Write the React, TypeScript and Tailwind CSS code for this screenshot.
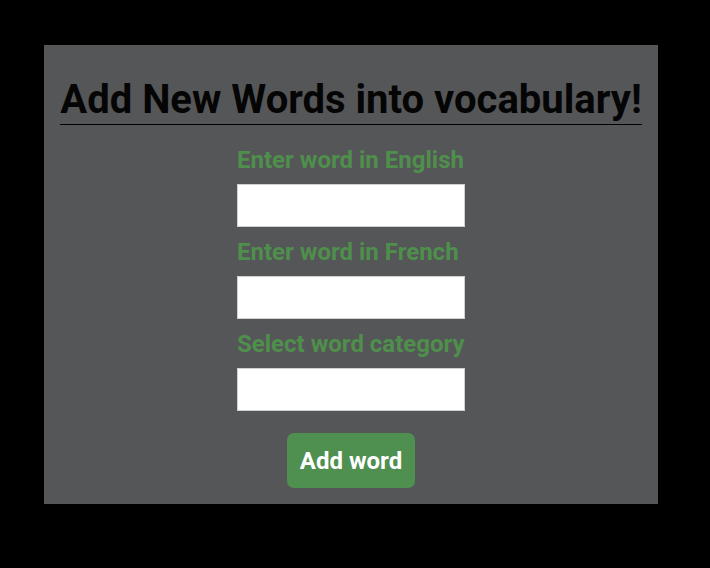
import { useState } from 'react'

export default function App(): React.JSX.Element {
  const [english, setEnglish] = useState('')
  const [french, setFrench] = useState('')
  const [category, setCategory] = useState('')

  const fields = [
    { label: 'Enter word in English', value: english, set: setEnglish },
    { label: 'Enter word in French', value: french, set: setFrench },
    { label: 'Select word category', value: category, set: setCategory },
  ]

  return (
    <div className="h-[568px] w-[710px] bg-black pl-[44px] pt-[45px] font-['Roboto',sans-serif]">
      <div className="flex h-[459px] w-[614px] flex-col items-center bg-[#555658] pt-[31px]">
        <h1 className="inline-block border-b border-black text-[40px] leading-[48px] font-bold text-[#050505]">
          Add New Words into vocabulary!
        </h1>
        <form className="mt-[21px] flex flex-col items-center" onSubmit={(e) => e.preventDefault()}>
          {fields.map((f) => (
            <label key={f.label} className="flex w-[228px] flex-col">
              <span className="h-[28px] pt-px text-[24px] leading-[27px] font-bold whitespace-nowrap text-[#4f8f4c]">
                {f.label}
              </span>
              <input
                value={f.value}
                onChange={(e) => f.set(e.target.value)}
                className="mt-[10px] mb-[11px] h-[43px] w-[228px] border border-[#d0d0d0] bg-white px-2 text-black outline-none"
              />
            </label>
          ))}
          <button
            type="submit"
            className="mt-[11px] h-[55px] w-[128px] rounded-[7px] bg-[#4f8f4f] text-[24px] font-bold text-white"
          >
            Add word
          </button>
        </form>
      </div>
    </div>
  )
}
